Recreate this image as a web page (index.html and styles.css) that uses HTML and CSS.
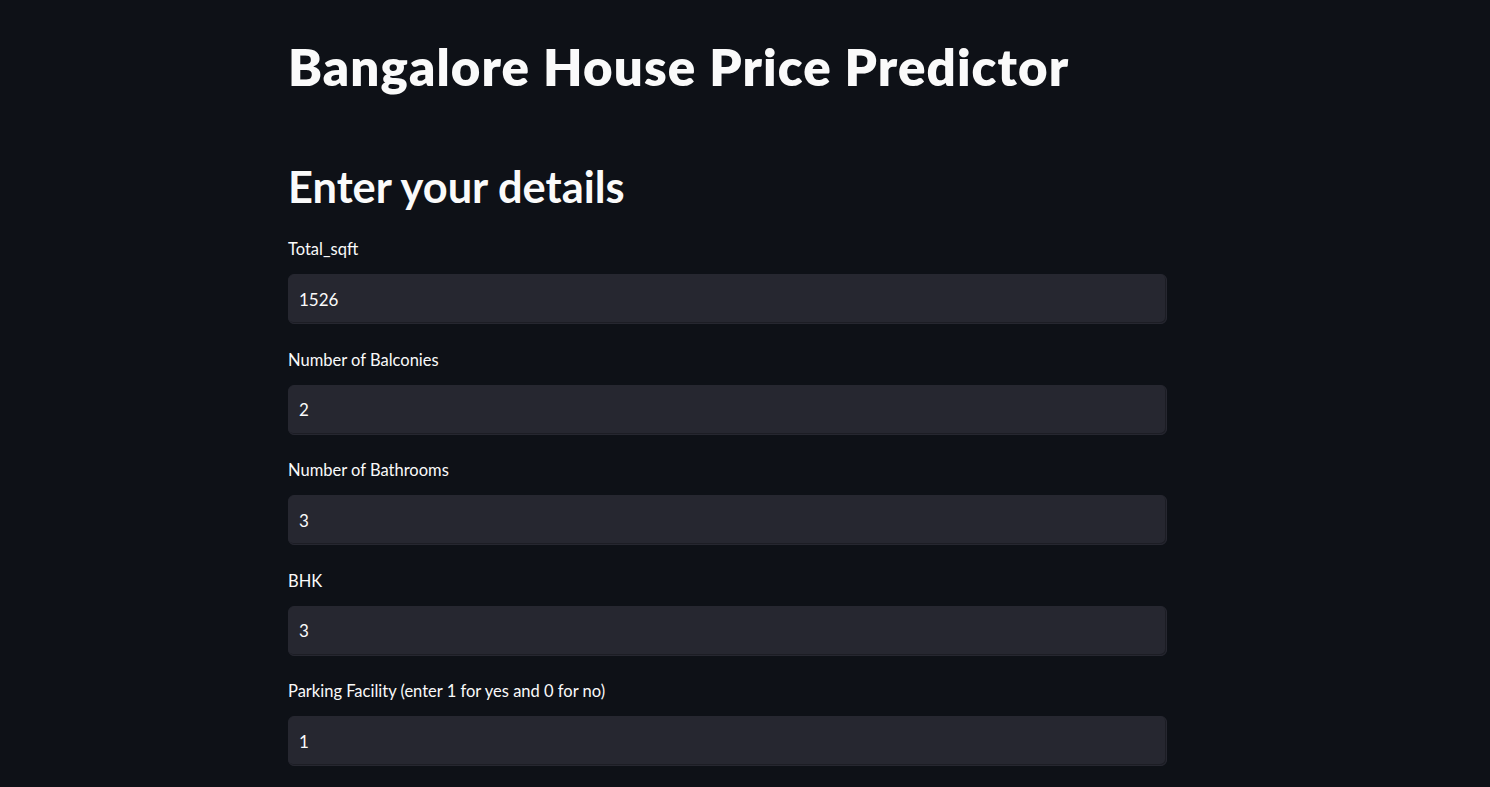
FILE: index.html
```html
<!DOCTYPE html>
<html lang="en">
<head>
<meta charset="utf-8">
<title>Bangalore House Price Predictor</title>
<link rel="stylesheet" href="styles.css">
</head>
<body>
<main class="page">
  <h1 class="title">Bangalore House Price Predictor</h1>
  <h2 class="subtitle">Enter your details</h2>
  <div class="fields">
    <div class="field">
      <label class="label" for="sqft">Total_sqft</label>
      <div class="box"><input class="input" id="sqft" type="text" value="1526"></div>
    </div>
    <div class="field">
      <label class="label" for="balc">Number of Balconies</label>
      <div class="box"><input class="input" id="balc" type="text" value="2"></div>
    </div>
    <div class="field">
      <label class="label" for="bath">Number of Bathrooms</label>
      <div class="box"><input class="input" id="bath" type="text" value="3"></div>
    </div>
    <div class="field">
      <label class="label" for="bhk">BHK</label>
      <div class="box"><input class="input" id="bhk" type="text" value="3"></div>
    </div>
    <div class="field">
      <label class="label" for="park">Parking Facility (enter 1 for yes and 0 for no)</label>
      <div class="box"><input class="input" id="park" type="text" value="1"></div>
    </div>
  </div>
</main>
</body>
</html>
```
FILE: styles.css
```css
html, body {
  margin: 0;
  padding: 0;
  background: #0e1117;
  height: 100%;
  overflow: hidden;
}
body {
  font-family: Lato, "Noto Sans", sans-serif;
  color: #fafafa;
}
.page {
  width: 879px;
  margin-left: 288px;
  padding-top: 36px;
  display: flex;
  flex-direction: column;
}
.title {
  margin: 0;
  font-size: 51px;
  line-height: 1.2;
  font-weight: 800;
  letter-spacing: 1.1px;
}
.subtitle {
  margin: 63px 0 0 0;
  font-size: 43.4px;
  line-height: 1.2;
  font-weight: 700;
}
.fields {
  margin-top: 25px;
  display: flex;
  flex-direction: column;
  gap: 23.5px;
}
.field {
  display: flex;
  flex-direction: column;
  gap: 13px;
}
.label {
  font-size: 16.5px;
  line-height: 24px;
  height: 24px;
}
.box {
  height: 50px;
  box-sizing: border-box;
  background: #262730;
  border: 1px solid #262730;
  border-radius: 6px;
  box-shadow: inset -1px -1px 0 #1c1d24;
  display: flex;
  align-items: center;
}
.input {
  flex: 1;
  background: transparent;
  border: none;
  outline: none;
  color: #fafafa;
  font-family: Lato, "Noto Sans", sans-serif;
  font-size: 17px;
  padding: 0 0 0 10px;
  height: 100%;
}
```
